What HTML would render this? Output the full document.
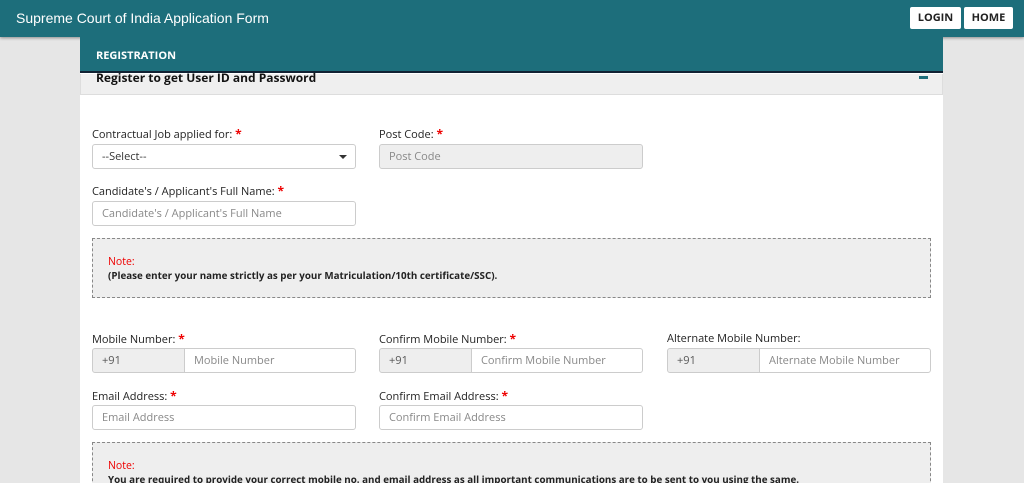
<!DOCTYPE html>
<html><head><style>
*{box-sizing:border-box;margin:0;padding:0}
html,body{width:1024px;height:483px;overflow:hidden}
body{background:#e6e6e6;font-family:"Open Sans","DejaVu Sans","Liberation Sans",sans-serif;position:relative}
.a{position:absolute}
.hdr{left:0;top:0;width:1024px;height:37px;background:#1d6e7b;box-shadow:0 1px 3px rgba(0,0,0,.4)}
.title{left:16px;top:10px;color:#fff;font-size:14px;font-family:"Liberation Sans",sans-serif}
.btn{top:7px;height:22px;background:#fff;border-radius:2px;font-size:11px;font-weight:bold;color:#222;text-align:center;line-height:22px}
.card{left:80px;top:37px;width:863px;height:446px;background:#fff}
.reg{left:80px;top:37px;width:863px;height:36px;background:#1d6e7b;border-bottom:2px solid #123;color:#fff;font-size:11px;font-weight:bold;padding:11px 16px}
.ph{left:80px;top:74px;width:863px;height:21px;background:#efefef;border:1px solid #ddd;border-top:none;font-size:12px;font-weight:bold;color:#111;padding:0 15px;line-height:8px}
.lbl{font-size:11px;color:#222}
.lbl b{color:#e00;font-size:12px}
.in{height:25px;border:1px solid #ccc;border-radius:3px;background:#fff;font-size:11px;color:#888;padding:0 9px;line-height:23px}
.g{background:#eee}
.note{left:92px;width:839px;border:1px dashed #888;background:#eee;font-size:9.8px;padding:0 15px}
.note .r{color:#e00;font-size:10.5px}
.note .t{font-weight:bold;color:#222}
</style></head><body>
<div class="a hdr"></div>
<div class="a title">Supreme Court of India Application Form</div>
<div class="a btn" style="left:910px;width:51px">LOGIN</div>
<div class="a btn" style="left:964px;width:49px">HOME</div>
<div class="a card"></div>
<div class="a reg">REGISTRATION</div>
<div class="a ph">Register to get User ID and Password<span style="position:absolute;right:14px;top:2px;width:9px;height:3px;background:#1d6e7b"></span></div>

<div class="a lbl" style="left:92px;top:125px">Contractual Job applied for: <b>*</b></div>
<div class="a in" style="left:92px;top:144px;width:264px;color:#333">--Select--<span style="position:absolute;right:8px;top:10px;border:4px solid transparent;border-top:4px solid #333;border-bottom:none"></span></div>
<div class="a lbl" style="left:379px;top:125px">Post Code: <b>*</b></div>
<div class="a in g" style="left:379px;top:144px;width:264px">Post Code</div>

<div class="a lbl" style="left:92px;top:182px">Candidate's / Applicant's Full Name: <b>*</b></div>
<div class="a in" style="left:92px;top:201px;width:264px">Candidate's / Applicant's Full Name</div>

<div class="a note" style="top:238px;height:60px;padding-top:16px"><div class="r">Note:</div><div class="t">(Please enter your name strictly as per your Matriculation/10th certificate/SSC).</div></div>

<div class="a lbl" style="left:92px;top:330px">Mobile Number: <b>*</b></div>
<div class="a in g" style="left:92px;top:348px;width:93px;color:#555;border-radius:3px 0 0 3px">+91</div>
<div class="a in" style="left:184px;top:348px;width:172px;border-radius:0 3px 3px 0">Mobile Number</div>
<div class="a lbl" style="left:379px;top:330px">Confirm Mobile Number: <b>*</b></div>
<div class="a in g" style="left:379px;top:348px;width:93px;color:#555;border-radius:3px 0 0 3px">+91</div>
<div class="a in" style="left:471px;top:348px;width:172px;border-radius:0 3px 3px 0">Confirm Mobile Number</div>
<div class="a lbl" style="left:667px;top:331px">Alternate Mobile Number:</div>
<div class="a in g" style="left:667px;top:348px;width:93px;color:#555;border-radius:3px 0 0 3px">+91</div>
<div class="a in" style="left:759px;top:348px;width:172px;border-radius:0 3px 3px 0">Alternate Mobile Number</div>

<div class="a lbl" style="left:92px;top:387px">Email Address: <b>*</b></div>
<div class="a in" style="left:92px;top:405px;width:264px">Email Address</div>
<div class="a lbl" style="left:379px;top:387px">Confirm Email Address: <b>*</b></div>
<div class="a in" style="left:379px;top:405px;width:264px">Confirm Email Address</div>

<div class="a note" style="top:442px;height:60px;padding-top:16px"><div class="r">Note:</div><div class="t">You are required to provide your correct mobile no. and email address as all important communications are to be sent to you using the same.</div></div>
</body></html>
